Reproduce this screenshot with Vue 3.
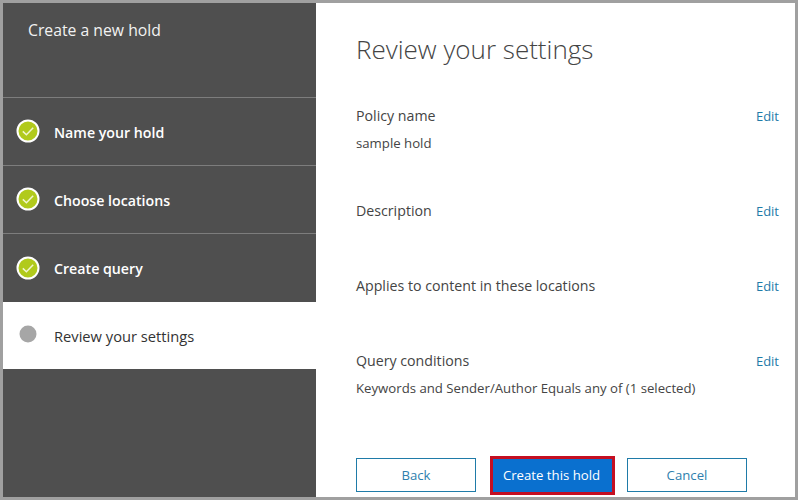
<script setup>
const steps = [
  { label: 'Name your hold', done: true },
  { label: 'Choose locations', done: true },
  { label: 'Create query', done: true },
  { label: 'Review your settings', done: false }
]
const sections = [
  { title: 'Policy name', value: 'sample hold' },
  { title: 'Description', value: '' },
  { title: 'Applies to content in these locations', value: '' },
  { title: 'Query conditions', value: 'Keywords and Sender/Author Equals any of (1 selected)' }
]
</script>

<template>
  <div class="frame">
    <aside class="side">
      <div class="side-title">Create a new hold</div>
      <ul class="steps">
        <li v-for="s in steps" :key="s.label" class="step" :class="{ current: !s.done }">
          <svg v-if="s.done" class="icon" viewBox="0 0 24 24" width="24" height="24">
            <circle cx="12" cy="12" r="10.5" fill="#b1ca1c" stroke="#fff" stroke-width="2" />
            <path d="M6.8 12.4l3.6 3.4 6.8-7" fill="none" stroke="#f2f6d0" stroke-width="1.5" />
          </svg>
          <svg v-else class="icon" viewBox="0 0 24 24" width="24" height="24">
            <circle cx="12" cy="12" r="8.5" fill="#a6a6a6" />
          </svg>
          <span class="label">{{ s.label }}</span>
        </li>
      </ul>
    </aside>
    <main class="main">
      <h1 class="heading">Review your settings</h1>
      <section v-for="s in sections" :key="s.title" class="block">
        <div class="block-head">
          <span class="block-title">{{ s.title }}</span>
          <a class="edit">Edit</a>
        </div>
        <div class="block-value">{{ s.value }}</div>
      </section>
      <div class="actions">
        <button class="btn">Back</button>
        <button class="btn primary">Create this hold</button>
        <button class="btn">Cancel</button>
      </div>
    </main>
  </div>
</template>

<style>
html, body { margin: 0; padding: 0; background: #a0a0a0; }
</style>

<style scoped>
.frame {
  box-sizing: border-box;
  width: 798px;
  height: 500px;
  border: 3px solid #a0a0a0;
  display: flex;
  background: #fff;
  font-family: "Open Sans", "Noto Sans", sans-serif;
  overflow: hidden;
}
.side {
  width: 313px;
  flex: none;
  background: #4f4f4f;
  color: #fff;
}
.side-title {
  box-sizing: border-box;
  height: 95px;
  padding: 16px 0 0 25px;
  font-size: 15.75px;
  line-height: 22px;
  color: #f2f2f2;
  border-bottom: 1px solid #7d7d7d;
}
.steps { list-style: none; margin: 0; padding: 0; }
.step {
  box-sizing: border-box;
  height: 68px;
  display: flex;
  align-items: center;
  padding: 0 0 0 12.5px;
  border-bottom: 1px solid #7d7d7d;
}
.step:nth-child(3) { border-bottom: none; }
.step.current { background: #fff; color: #333; border-bottom: none; height: 67px; }
.icon { flex: none; margin-top: -1px; }
.current .icon { margin-top: -3px; }
.label {
  margin-left: 14.5px;
  margin-top: 2px;
  font-size: 14.2px;
  font-weight: 600;
  line-height: 20px;
}
.current .label { font-weight: 400; font-size: 14.7px; margin-top: 0; }
.main {
  flex: 1;
  padding: 0 16px 0 40px;
  min-width: 0;
}
.heading {
  margin: 27px 0 37px;
  font-size: 26px;
  line-height: 38px;
  font-weight: 300;
  color: #444;
}
.block { margin-bottom: 47px; }
.block:last-of-type { margin-bottom: 60px; }
.block-head {
  display: flex;
  justify-content: space-between;
  align-items: center;
  height: 20px;
}
.block-title { font-size: 14.2px; color: #444; }
.edit { font-size: 13px; color: #1f7ba8; margin-top: 2px; }
.block-value {
  padding-top: 8px;
  font-size: 13.2px;
  line-height: 20px;
  color: #444;
}
.block-value:empty { height: 0; line-height: 0; }
.actions { display: flex; align-items: center; }
.btn {
  box-sizing: border-box;
  width: 120px;
  height: 34px;
  border: 1px solid #1f7ba8;
  background: #fff;
  color: #2f7fae;
  font: inherit;
  font-size: 13.2px;
  padding: 0;
}
.btn.primary {
  width: 119px;
  height: 33px;
  margin: 0 15px 0 17px;
  padding-right: 2px;
  background: #0a70cf;
  color: #fff;
  border: none;
  outline: 3px solid #c40f22;
}
</style>
